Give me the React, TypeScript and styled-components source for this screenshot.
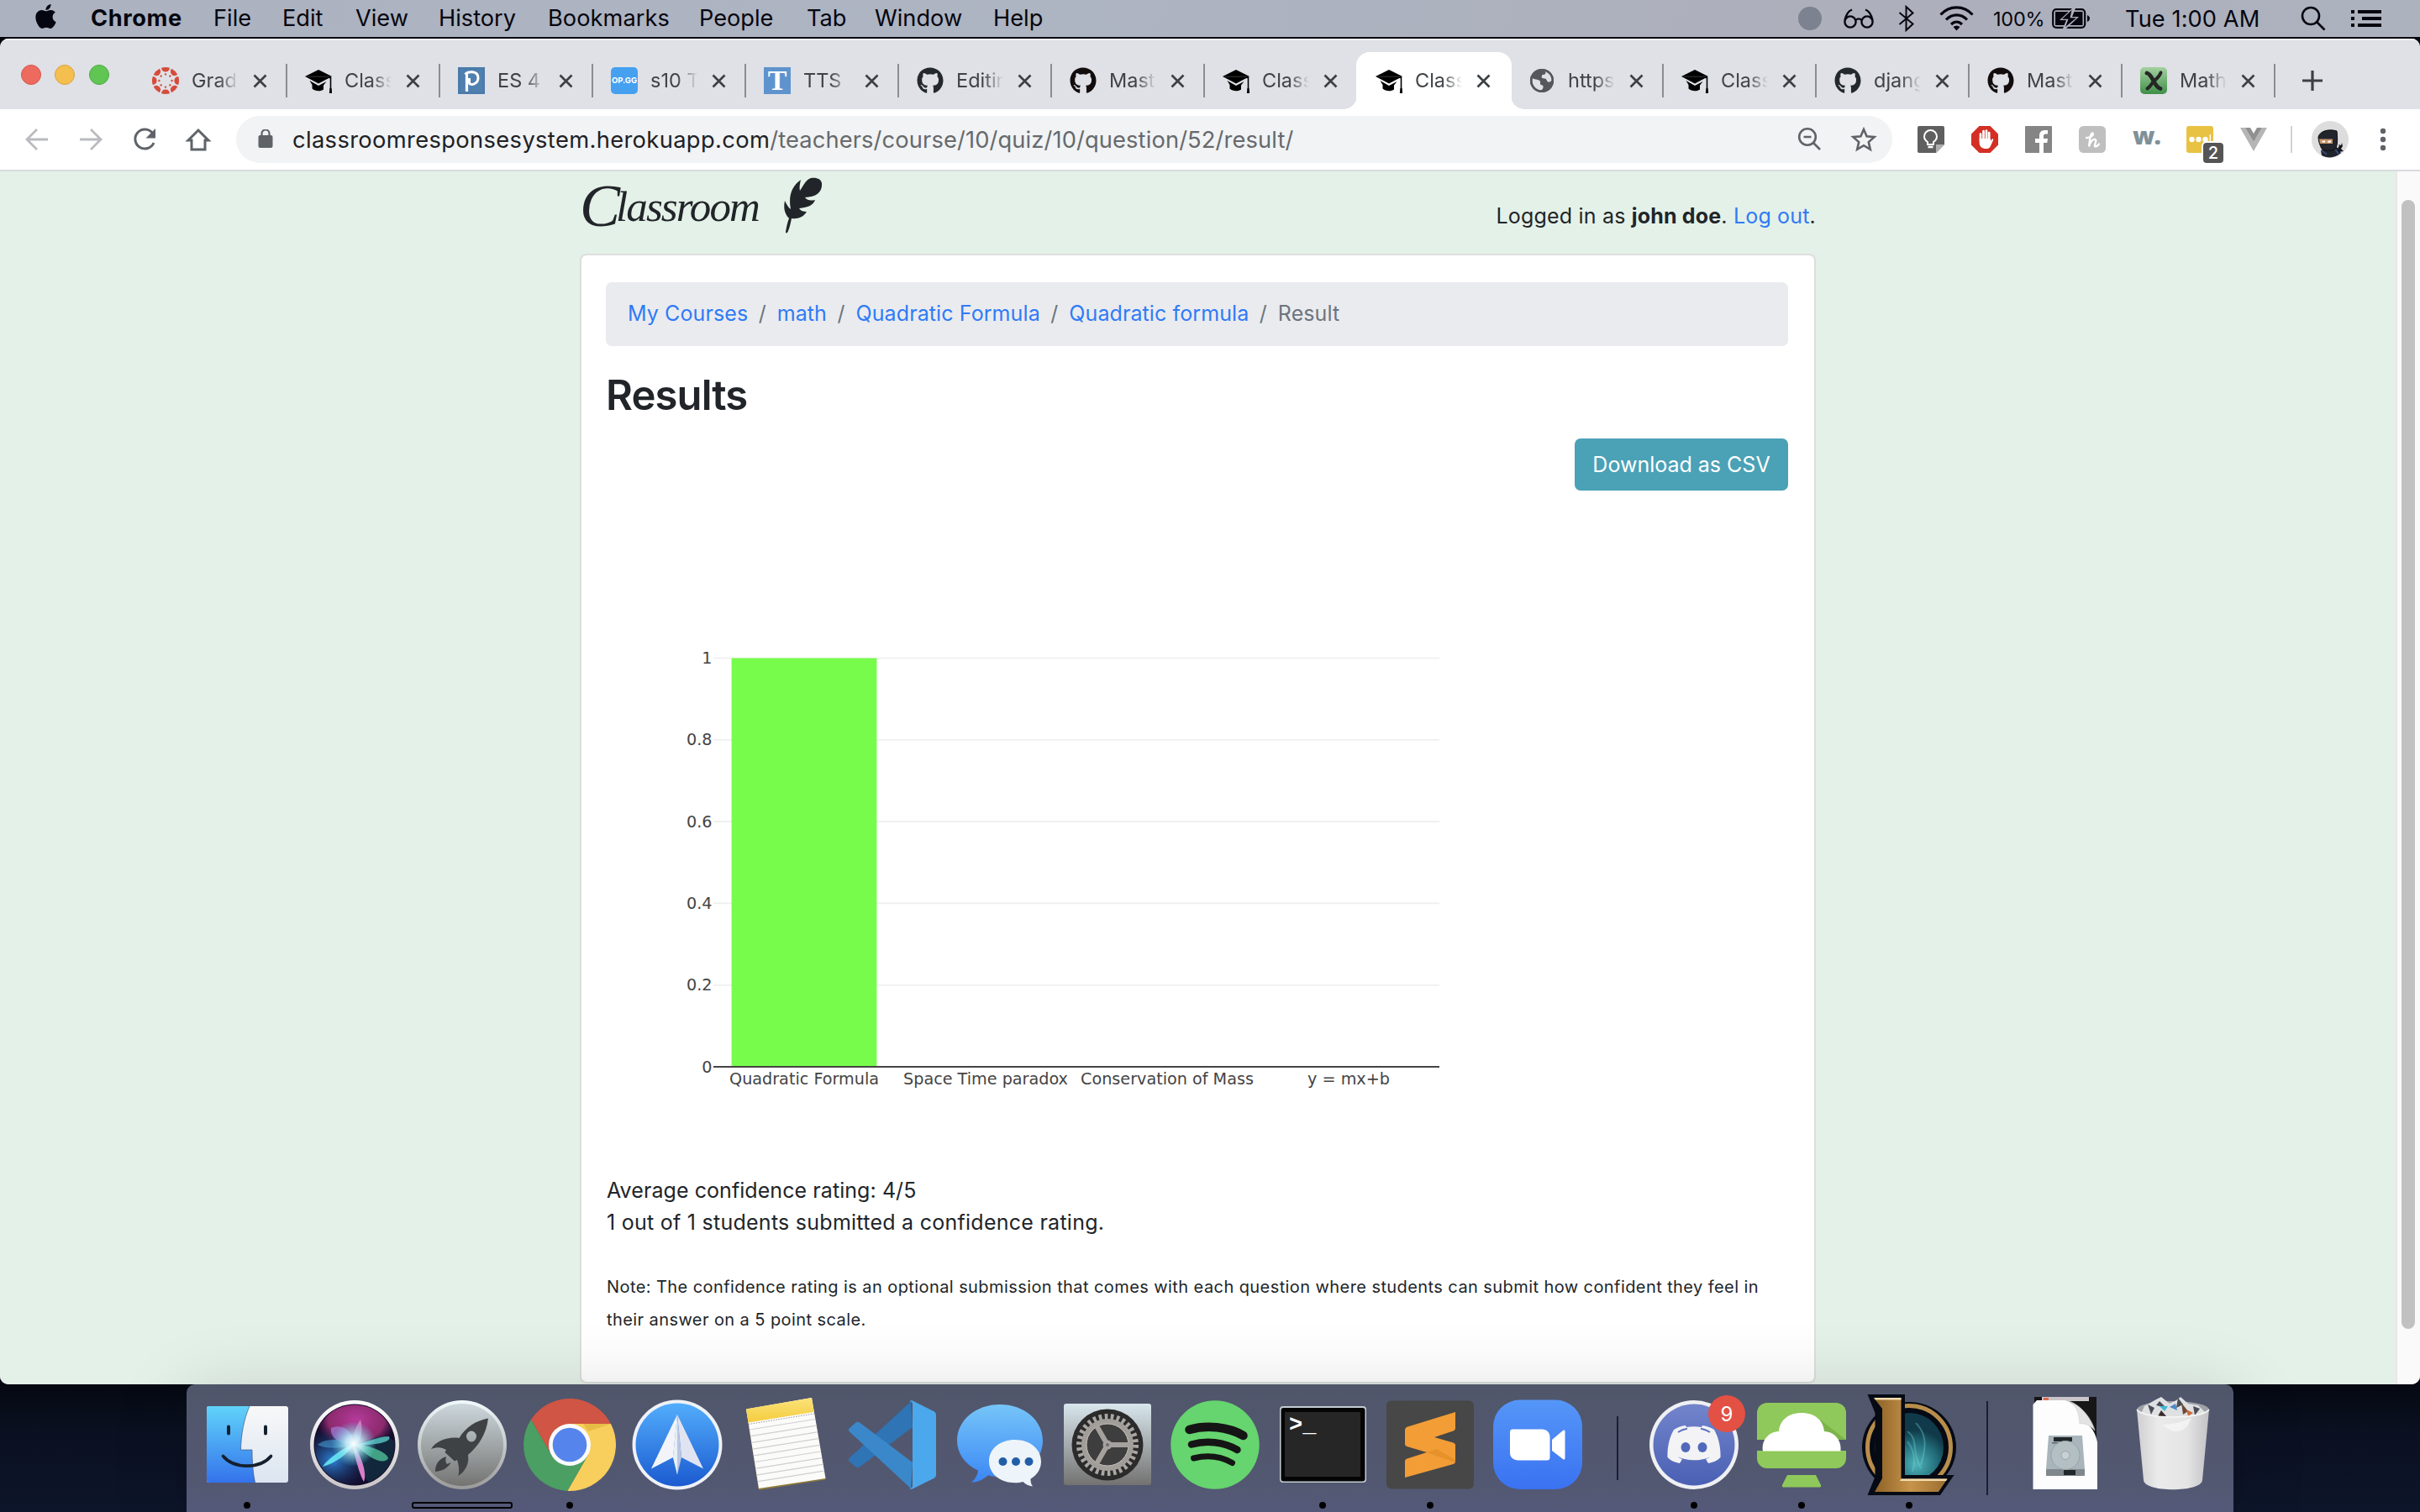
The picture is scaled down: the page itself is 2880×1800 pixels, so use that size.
import React from "react";
import styled, { createGlobalStyle, css } from "styled-components";
import { FaApple, FaGithub } from "react-icons/fa";

const GlobalStyle = createGlobalStyle`
  * { box-sizing: border-box; }
  html, body { margin: 0; padding: 0; width: 2880px; height: 1800px; overflow: hidden; }
  body { font-family: Inter, "Liberation Sans", sans-serif; color: #212529; }
  svg { display: block; flex: none; }
`;

/* ---------- desktop shell ---------- */

const Desktop = styled.div`
  width: 2880px;
  height: 1800px;
  display: flex;
  flex-direction: column;
  overflow: hidden;
  background: linear-gradient(#04070f 0, #04070f 1640px, #0a1020 1700px, #0d152a 1800px);
`;

const MenuBar = styled.header`
  height: 44px;
  flex: none;
  display: flex;
  align-items: center;
  justify-content: space-between;
  padding: 0 46px 0 38px;
  background: linear-gradient(90deg, #acb2c0, #adb4c2 45%, #adafbb 75%, #adb2bf);
  color: #05060f;
`;

const MenuGroup = styled.nav`
  display: flex;
  align-items: center;
`;

const MenuItem = styled.span<{ $w: number; $bold?: boolean; $track?: number }>`
  width: ${(p) => p.$w}px;
  font-size: 27.2px;
  line-height: 44px;
  font-weight: ${(p) => (p.$bold ? 700 : 400)};
  letter-spacing: ${(p) => p.$track ?? 0}px;
  white-space: nowrap;
`;

const AppleMark = styled(FaApple)`
  margin-top: 3px;
  margin-bottom: 8px;
`;

const StatusGroup = styled.div`
  display: flex;
  align-items: center;
`;

const StatusSlot = styled.div<{ $w: number }>`
  width: ${(p) => p.$w}px;
  display: flex;
  align-items: center;
  flex: none;
`;

const StatusText = styled.span<{ $size: number; $track?: number }>`
  font-size: ${(p) => p.$size}px;
  letter-spacing: ${(p) => p.$track ?? 0}px;
  white-space: nowrap;
`;

const RecordDot = styled.span`
  width: 28px;
  height: 28px;
  border-radius: 50%;
  background: #7c828f;
`;

const BrowserWindow = styled.main`
  margin-top: 2px;
  height: 1602px;
  flex: none;
  display: flex;
  flex-direction: column;
  border-radius: 10px;
  overflow: hidden;
  background: #fff;
`;

/* ---------- tab strip ---------- */

const TabStrip = styled.div`
  height: 84px;
  flex: none;
  display: flex;
  align-items: flex-end;
  background: #dfe1e6;
  border-top: 2px solid #f0f1f4;
`;

const Lights = styled.div`
  width: 159px;
  height: 82px;
  padding: 0 0 1px 25px;
  display: flex;
  align-items: center;
  gap: 16.4px;
`;

const Light = styled.span<{ $c: string; $b: string }>`
  width: 24px;
  height: 24px;
  border-radius: 50%;
  background: ${(p) => p.$c};
  border: 1px solid ${(p) => p.$b};
`;

const TabBox = styled.div<{ $active?: boolean }>`
  position: relative;
  width: 182px;
  height: 68px;
  flex: none;
  display: flex;
  align-items: center;
  padding-left: 22px;
  ${(p) =>
    p.$active &&
    css`
      background: #fff;
      border-radius: 16px 16px 0 0;
      box-shadow: -1px 0 0 #fff, 2px 0 0 #fff;
      &::before,
      &::after {
        content: "";
        position: absolute;
        bottom: 0;
        width: 16px;
        height: 16px;
      }
      &::before {
        left: -16px;
        background: radial-gradient(circle at 0 0, transparent 15.5px, #fff 16px);
      }
      &::after {
        right: -17px;
        background: radial-gradient(circle at 100% 0, transparent 15.5px, #fff 16px);
      }
    `}
`;

const Divider = styled.span`
  width: 2px;
  height: 40px;
  margin-left: auto;
  margin-right: -1px;
  background: #8b8d92;
`;

const TabTitle = styled.span`
  width: 72px;
  margin-left: 15px;
  overflow: hidden;
  white-space: nowrap;
  font-size: 23.5px;
  line-height: 32px;
  color: #3f4246;
  mask-image: linear-gradient(90deg, #000 32px, transparent 56px);
`;

const CloseSlot = styled.span`
  margin-left: 1px;
  display: flex;
`;

const NewTab = styled.div`
  width: 90px;
  height: 68px;
  display: flex;
  align-items: center;
  justify-content: center;
`;

/* ---------- toolbar ---------- */

const Toolbar = styled.div`
  height: 74px;
  flex: none;
  display: flex;
  align-items: center;
  padding-left: 28px;
  background: #fff;
  border-bottom: 2px solid #d9dbe0;
`;

const NavButton = styled.span`
  width: 64px;
  display: flex;
  align-items: center;
`;

const Omnibox = styled.div`
  width: 1971px;
  height: 56px;
  margin-left: -3px;
  border-radius: 28px;
  background: #f1f3f4;
  display: flex;
  align-items: center;
  padding: 0 18px 0 26px;
`;

const Url = styled.span`
  margin-left: 23px;
  font-size: 27.3px;
  letter-spacing: 0.12px;
  color: #67696c;
  white-space: nowrap;
  b {
    font-weight: 400;
    letter-spacing: 0.36px;
    color: #202124;
  }
`;

const OmniActions = styled.span`
  margin-left: auto;
  display: flex;
  gap: 34px;
  align-items: center;
`;

const Extensions = styled.div`
  display: flex;
  align-items: center;
  margin-left: 30px;
  gap: 32px;
`;

const ExtensionSlot = styled.span`
  position: relative;
  width: 32px;
  height: 32px;
  display: flex;
`;

const CountBadge = styled.span`
  position: absolute;
  left: 20px;
  top: 20px;
  width: 24px;
  height: 24px;
  border-radius: 4px;
  box-shadow: 0 0 0 2px #fff;
  background: #555;
  color: #fff;
  font-size: 20px;
  font-weight: 500;
  line-height: 24px;
  text-align: center;
`;

const WExtension = styled.span`
  width: 36px;
  margin-right: -4px;
  height: 32px;
  font-family: "Open Sans", sans-serif;
  font-weight: 800;
  font-size: 29px;
  line-height: 22px;
  letter-spacing: -1px;
  color: #7f9198;
`;

const ToolDivider = styled.span`
  width: 2px;
  height: 32px;
  margin: 0 23px 0 28px;
  background: #d0d2d5;
`;

/* ---------- page ---------- */

const Viewport = styled.div`
  flex: 1;
  min-height: 0;
  display: flex;
`;

const Page = styled.div`
  flex: 1;
  background: #e4f1e8;
  display: flex;
  flex-direction: column;
  align-items: center;
`;

const ScrollTrack = styled.div`
  width: 29px;
  background: #fafafa;
  border-left: 2px solid #e8e8e8;
  padding: 34px 0 0 5px;
`;

const ScrollThumb = styled.div`
  width: 16px;
  height: 1344px;
  border-radius: 8px;
  background: #c1c1c1;
`;

const Container = styled.div`
  width: 1471px;
`;

const PageHeader = styled.div`
  height: 98px;
  display: flex;
  justify-content: space-between;
`;

const Brand = styled.div`
  display: flex;
`;

const BrandName = styled.span`
  width: 243px;
  font-family: "Liberation Serif", serif;
  font-style: italic;
  font-size: 51px;
  letter-spacing: -1.9px;
  line-height: 84px;
  white-space: nowrap;
  color: #212529;
`;

const BrandInitial = styled.span`
  font-size: 72px;
  line-height: 0;
  letter-spacing: -5px;
  vertical-align: -6px;
`;

const LoginText = styled.span`
  margin-top: 34px;
  font-size: 25px;
  line-height: 38.4px;
  letter-spacing: 0.18px;
`;

const Link = styled.a`
  color: #2f7bf6;
`;

const Card = styled.section`
  height: 1345px;
  background: #fff;
  border: 2px solid #dcdedd;
  border-radius: 8px;
  padding: 32px 31px 0 29px;
  display: flex;
  flex-direction: column;
`;

const Breadcrumb = styled.nav`
  height: 76px;
  flex: none;
  border-radius: 7px;
  background: #eaebef;
  padding: 0 26px 2px;
  display: flex;
  align-items: center;
  font-size: 25px;
  letter-spacing: 0.1px;
  color: #6c757d;
`;

const Slash = styled.span`
  padding: 0 12.9px 0 12.5px;
`;

const Heading = styled.h2`
  margin: 28px 0 0;
  font-size: 49px;
  font-weight: 600;
  line-height: 61px;
  letter-spacing: -0.9px;
`;

const DownloadButton = styled.button`
  align-self: flex-end;
  width: 254px;
  height: 62px;
  flex: none;
  margin-top: 21px;
  padding: 0;
  border: 0;
  border-radius: 7px;
  background: #4ba1b6;
  color: #fff;
  font-family: inherit;
  font-size: 25px;
  white-space: nowrap;
`;

const Chart = styled.svg`
  width: 1404px;
  height: 814px;
  text {
    font-family: "DejaVu Sans", sans-serif;
    font-size: 19.2px;
    fill: #444;
  }
`;

const SummaryLine = styled.p<{ $track: number }>`
  margin: 0;
  padding-left: 1px;
  font-size: 25px;
  line-height: 38.4px;
  letter-spacing: ${(p) => p.$track}px;
`;

const Note = styled.p`
  margin: 38.5px 0 0;
  padding-left: 1px;
  font-size: 20px;
  line-height: 38.4px;
  letter-spacing: 0.42px;
  white-space: nowrap;
`;

const answers = [
  { label: "Quadratic Formula", value: 1 },
  { label: "Space Time paradox", value: 0 },
  { label: "Conservation of Mass", value: 0 },
  { label: "y = mx+b", value: 0 },
];

function ResultChart() {
  const base = 686;
  const unit = 486.5;
  const left = 128;
  const step = 216;
  return (
    <Chart viewBox="0 0 1404 814">
      {[0.2, 0.4, 0.6, 0.8, 1].map((v) => (
        <line key={v} x1={left} x2={left + 864} y1={base - v * unit} y2={base - v * unit} stroke="#eee" strokeWidth="1.6" />
      ))}
      {answers.map((a, i) => (
        <g key={a.label}>
          <rect x={left + step * i + 21.6} width="172.8" y={base - a.value * unit} height={a.value * unit} fill="#77fc4c" />
          <text x={left + step * i + 108} y={base + 21} textAnchor="middle">{a.label}</text>
        </g>
      ))}
      <line x1={left} x2={left + 864} y1={base} y2={base} stroke="#444" strokeWidth="2" />
      {["0", "0.2", "0.4", "0.6", "0.8", "1"].map((t) => (
        <text key={t} x={left - 1.5} y={base - Number(t) * unit + 6.5} textAnchor="end">{t}</text>
      ))}
    </Chart>
  );
}

/* ---------- small icons ---------- */

const CanvasIcon = () => (
  <svg width="32" height="32" viewBox="-16 -16 32 32" fill="#d64b3c">
    {[0, 45, 90, 135, 180, 225, 270, 315].map((a) => (
      <g key={a} transform={`rotate(${a})`}>
        <path d="M-5 -15.2 Q0 -16.8 5 -15.2 Q4.4 -10.6 0 -10.4 Q-4.4 -10.6 -5 -15.2Z" />
        <circle cx="0" cy="-7.6" r="1.2" />
      </g>
    ))}
  </svg>
);

const CapIcon = () => (
  <svg width="32" height="32" viewBox="0 0 32 32">
    <path d="M0 11 16 3l16 8-16 8.500z" fill="#000" />
    <path d="M5.500 16 16 22l9.500-5-3.500 4.500v5c-3 2.500-10 2.500-13.500-1V21z" fill="#000" />
    <path d="M16 11l14.500 1.500V27" stroke="#000" strokeWidth="1.600" fill="none" />
    <path d="M3 11.200H29" stroke="#444" strokeWidth=".8" />
    <path d="M29.500 25h2l.7 6h-3.400z" fill="#000" />
  </svg>
);

const PiazzaIcon = () => (
  <svg width="32" height="32" viewBox="0 0 32 32">
    <rect width="32" height="32" fill="#4a7bab" />
    <rect x="3" y="3" width="26" height="26" fill="#5586b3" opacity=".5" />
    <path d="M10.500 29V8" stroke="#fff" strokeWidth="3.200" />
    <path d="M8.500 8.500C12 4.500 24 4 24 12.500c0 8-9 9.500-10.500 6.500V13" stroke="#fff" strokeWidth="3" fill="none" />
  </svg>
);

const Favicon = styled.span<{ $bg: string; $size: number; $font?: string; $r?: number }>`
  width: 32px;
  height: 32px;
  flex: none;
  border-radius: ${(p) => p.$r ?? 0}px;
  background: ${(p) => p.$bg};
  color: #fff;
  font-family: ${(p) => p.$font ?? "inherit"};
  font-weight: 700;
  font-size: ${(p) => p.$size}px;
  line-height: 32px;
  text-align: center;
`;

const GlobeIcon = () => (
  <svg width="32" height="32" viewBox="0 0 32 32">
    <circle cx="16" cy="16" r="14" fill="#54575b" />
    <path d="M4.500 14.500c3.500 1.500 8.500.5 9.500 2.500s-.5 3.500 2 4 3 1.500 2.500 3.500-1 2.500-2.500 3C9 27.500 3.500 21.500 4.500 14.500zM16 4.500c2 0 3.500.3 3 2.500s-4 1-4 3.500 1 2.500 4 2.500 2.500 3.500 5 3.500 3-1.500 3.500-2.500C27 8 22 4 16 4.500z" fill="#dfe1e6" transform="rotate(8 16 16)" />
    <circle cx="16" cy="16" r="12.800" fill="none" stroke="#54575b" strokeWidth="2.600" />
  </svg>
);

const MathIcon = () => (
  <svg width="32" height="32" viewBox="0 0 32 32">
    <defs>
      <linearGradient id="mg" x1="0" y1="0" x2="0" y2="1">
        <stop offset="0" stopColor="#a5d0a0" />
        <stop offset="1" stopColor="#3f9048" />
      </linearGradient>
    </defs>
    <rect width="32" height="32" rx="5" fill="url(#mg)" />
    <path d="M8 7c4 1 6 6 8 9.500s4 8 8 9" stroke="#262626" strokeWidth="4.800" strokeLinecap="round" fill="none" />
    <path d="M24.500 6.500c-1.500 5-5 7-8 10s-3.500 6-8 9" stroke="#262626" strokeWidth="4" strokeLinecap="round" fill="none" />
  </svg>
);

const CloseIcon = () => (
  <svg width="17" height="17" viewBox="0 0 17 17" stroke="#3c4043" strokeWidth="2.700">
    <path d="M1.500 1.500l14 14M15.500 1.500l-14 14" />
  </svg>
);

const tabs: { icon: React.ReactNode; title: string; active?: boolean; divider?: boolean }[] = [
  { icon: <CanvasIcon />, title: "Grad", divider: true },
  { icon: <CapIcon />, title: "Class", divider: true },
  { icon: <PiazzaIcon />, title: "ES 4", divider: true },
  { icon: <Favicon $bg="#45a0ef" $size={9.5} $r={5}>OP.GG</Favicon>, title: "s10 T", divider: true },
  { icon: <Favicon $bg="#5f93cd" $size={34} $font='"Liberation Serif", serif'>T</Favicon>, title: "TTS", divider: true },
  { icon: <FaGithub size={32} color="#24292e" />, title: "Editin", divider: true },
  { icon: <FaGithub size={32} color="#120c0d" />, title: "Mast", divider: true },
  { icon: <CapIcon />, title: "Class" },
  { icon: <CapIcon />, title: "Class", active: true },
  { icon: <GlobeIcon />, title: "https", divider: true },
  { icon: <CapIcon />, title: "Class", divider: true },
  { icon: <FaGithub size={32} color="#24292e" />, title: "djang", divider: true },
  { icon: <FaGithub size={32} color="#120c0d" />, title: "Mast", divider: true },
  { icon: <MathIcon />, title: "Math", divider: true },
];

const GlassesIcon = () => (
  <svg width="36" height="24" viewBox="0 0 36 24" fill="none" stroke="#05060f" strokeWidth="2.400">
    <circle cx="8" cy="16" r="6.600" />
    <circle cx="28" cy="16" r="6.600" />
    <path d="M14.500 14c2-2 5-2 7 0M1.500 14C3 7 6 3 10 1.500M34.500 14C33 7 30 3 26 1.500" />
  </svg>
);

const BluetoothIcon = () => (
  <svg width="20" height="32" viewBox="0 0 20 32" fill="none" stroke="#05060f" strokeWidth="2">
    <path d="M1.500 9l16 13.500-8 7.500V2l8 7.500L1.500 23" />
  </svg>
);

const WifiIcon = () => (
  <svg width="41" height="30" viewBox="0 0 41 30" fill="none" stroke="#05060f" strokeWidth="3.200">
    <path d="M1.500 10.500C12-1 29-1 39.500 10.500M8 16.500c7-7.500 18-7.500 25 0M14 22c4-4 9-4 13 0" />
    <path d="M16.500 25c2.500-2 5.500-2 8 0l-4 4.500z" fill="#05060f" stroke="none" />
  </svg>
);

const BatteryIcon = () => (
  <svg width="46" height="24" viewBox="0 0 46 24">
    <rect x="1.200" y="1.200" width="38" height="21.600" rx="4" fill="none" stroke="#05060f" strokeWidth="2.200" />
    <path d="M42 8c4 1.500 4 6.500 0 8z" fill="#05060f" />
    <path d="M4 4h32.500v16H4z" fill="#05060f" />
    <path d="M24 0 9 14h8l-4 10h4l15-14h-8l4-10z" fill="#adb1be" />
    <path d="M23.500 2 12 12.800h7.500L16 22l13-10.800h-7.500z" fill="#05060f" />
  </svg>
);

const SearchIcon = () => (
  <svg width="30" height="30" viewBox="0 0 30 30" fill="none" stroke="#05060f" strokeWidth="2.600">
    <circle cx="12" cy="12" r="10" />
    <path d="M19 19l9.500 9.500" />
  </svg>
);

const ListIcon = () => (
  <svg width="36" height="20" viewBox="0 0 36 20" fill="#05060f">
    <path d="M0 0h4v4H0zM0 8h4v4H0zM0 16h4v4H0zM8 0h28v4H8zM13 8h23v4H13zM8 16h28v4H8z" />
  </svg>
);

const LockIcon = () => (
  <svg width="18" height="24" viewBox="0 0 18 24">
    <rect x="0.500" y="7" width="17" height="15" rx="2" fill="#5f6368" />
    <path d="M4.500 8V5a4.500 4.500 0 0 1 9 0v3" fill="none" stroke="#5f6368" strokeWidth="2.200" />
  </svg>
);

const Arrow = ({ flip }: { flip?: boolean }) => (
  <svg width="32" height="32" viewBox="0 0 32 32" fill="none" stroke="#b9bbbe" strokeWidth="2.800" transform={flip ? "scale(-1 1)" : undefined}>
    <path d="M29 16H4M16 4 4 16l12 12" />
  </svg>
);

const ReloadIcon = () => (
  <svg width="32" height="32" viewBox="0 0 32 32">
    <path d="M27 20A11.500 11.500 0 1 1 25.500 8.500" fill="none" stroke="#5f6368" strokeWidth="3" />
    <path d="M29 3v11.500H17.500z" fill="#5f6368" />
  </svg>
);

const HomeIcon = () => (
  <svg width="32" height="32" viewBox="0 0 32 32" fill="none" stroke="#5f6368" strokeWidth="3">
    <path d="M4 17 16 5l12 12h-4v11H8V17z" strokeLinejoin="miter" />
  </svg>
);

const ZoomOutIcon = () => (
  <svg width="30" height="30" viewBox="0 0 30 30" fill="none" stroke="#5f6368" strokeWidth="2.600">
    <circle cx="13" cy="12" r="9.800" />
    <path d="M20 19 28 27M8.500 12h9" />
  </svg>
);

const StarIcon = () => (
  <svg width="32" height="32" viewBox="0 0 32 32" fill="none" stroke="#5f6368" strokeWidth="2.600">
    <path d="M16 4l3.600 8.300 9 .8-6.800 6 2 8.800L16 23.200 8.200 27.900l2-8.800-6.800-6 9-.8z" />
  </svg>
);

const BulbExt = () => (
  <svg width="32" height="32" viewBox="0 0 32 32">
    <path d="M2 0h28a2 2 0 0 1 2 2v20L22 32H2a2 2 0 0 1-2-2V2a2 2 0 0 1 2-2z" fill="#5f5f5f" />
    <path d="M22 22h10L22 32z" fill="#b0b0b0" />
    <path d="M12 19c-3-2-4-4-4-6.500a7.500 7.500 0 0 1 15 0c0 2.500-1 4.500-4 6.500v3h-7z" fill="none" stroke="#fff" strokeWidth="2" />
    <path d="M12.500 25h6" stroke="#fff" strokeWidth="2.400" />
  </svg>
);

const HandExt = () => (
  <svg width="32" height="32" viewBox="0 0 32 32">
    <path d="M9.500 0h13L32 9.500v13L22.500 32h-13L0 22.500v-13z" fill="#d32f25" />
    <path d="M11 18V9.500M14.500 17V6M18 17V5.500M21.200 18V8" stroke="#fff" strokeWidth="2.700" strokeLinecap="round" />
    <path d="M9.700 15h12.900l1 2.500 1.200-2c.9-.8 1.700 0 1.300 1.200l-3.300 7.500c-1 2-2.600 2.800-5.200 2.800-5 0-7.900-2.500-7.900-7z" fill="#fff" />
  </svg>
);

const FacebookExt = () => (
  <svg width="32" height="32" viewBox="0 0 32 32">
    <rect width="32" height="32" rx="1" fill="#858585" />
    <path d="M17 32V20h-5v-5h5v-3.500C17 7 20 5 23.500 5H27v4.500h-2.500c-2 0-2.500 1-2.500 2.500v3h5l-.7 5H22v12z" fill="#fff" />
  </svg>
);

const HoneyExt = () => (
  <svg width="32" height="32" viewBox="0 0 32 32">
    <rect width="32" height="32" rx="5.500" fill="#bfbfbf" />
    <path d="M9 14c5 .5 9.500-4 7.500-5.500-2.500-1-3.500 8-4.500 16 2-6 5-9 7.500-8.500 3 1-3 8.500.5 8.500 1.800 0 3-1.500 4-3" fill="none" stroke="#fff" strokeWidth="2.300" strokeLinecap="round" />
  </svg>
);

const DotsExt = () => (
  <svg width="32" height="32" viewBox="0 0 32 32">
    <rect width="32" height="32" rx="3" fill="#e8c243" />
    <g fill="#fff">
      <circle cx="6.500" cy="16" r="3.200" />
      <circle cx="14.500" cy="16" r="3.200" />
      <circle cx="22.500" cy="16" r="3.200" />
      <path d="M27.600 10h1.400v11h-1.400z" />
    </g>
  </svg>
);

const VueExt = () => (
  <svg width="32" height="32" viewBox="0 0 32 32">
    <path d="M0 2h6l10 17L26 2h6L16 30z" fill="#b5b5b5" />
    <path d="M6 2h6l4 7 4-7h6L16 19z" fill="#909090" />
  </svg>
);

const NinjaAvatar = () => (
  <svg width="44" height="44" viewBox="0 0 44 44">
    <circle cx="22" cy="22" r="22" fill="#dddddd" />
    <path d="M11 35c4-3 16-4 20-3l4 6c-6 6-16 7-23 3z" fill="#20242c" />
    <path d="M8 19C10 12 20 9 30 12c1 8 1 15-1 21-5 3-13 3-17 0-2-4-4-9-4-14z" fill="#22252b" stroke="#0c0e12" />
    <path d="M9 21.500h16v5.500H10z" fill="#c69468" />
    <path d="M12 24l4-.8v2.200h-3zM19 24l4.500-1-1 2.800h-3z" fill="#fff" />
    <path d="M12 35l6 5M28 34l4 5" stroke="#37558f" strokeWidth="1.500" />
    <path d="M32 37c-1-4-1-6 1-7l-1-2 3 1 1-3 1 4-2 3 3 3z" fill="#16181d" />
  </svg>
);

/* ---------- dock ---------- */

const DockArea = styled.footer`
  height: 152px;
  display: flex;
  justify-content: center;
`;

const DockShelf = styled.div`
  position: relative;
  width: 2436px;
  height: 152px;
  padding: 0 8px;
  display: flex;
  border-radius: 10px 10px 0 0;
  background: linear-gradient(#50566a, #535872 80%, #54597a);
  box-shadow: 0 14px 90px rgba(0, 0, 0, 0.16);
`;

const DockCell = styled.div`
  width: 128px;
  flex: none;
  display: flex;
  flex-direction: column;
  align-items: center;
`;

const RunningDot = styled.span`
  width: 8px;
  height: 8px;
  margin-top: 4px;
  border-radius: 50%;
  background: #000;
`;

const LaunchIndicator = styled.span`
  width: 120px;
  height: 8px;
  margin-top: 4px;
  border: 2px solid #000;
  border-radius: 3px;
`;

const DockDivider = styled.div<{ $h: number; $top: number; $left: number }>`
  width: 2px;
  height: ${(p) => p.$h}px;
  margin: ${(p) => p.$top}px ${(p) => 56 - p.$left}px 0 ${(p) => p.$left}px;
  background: #1a1f36;
`;

const Glyph = ({ children }: { children: React.ReactNode }) => (
  <svg width="128" height="136" viewBox="0 0 128 136">{children}</svg>
);

const Grad = ({ id, a, b }: { id: string; a: string; b: string }) => (
  <linearGradient id={id} x1="0" y1="0" x2="0" y2="1">
    <stop offset="0" stopColor={a} />
    <stop offset="1" stopColor={b} />
  </linearGradient>
);

const Finder = () => (
  <Glyph>
    <defs>
      <Grad id="fa" a="#60d3fa" b="#3473ec" />
      <Grad id="fb" a="#f8f8f8" b="#dbe5f1" />
      <clipPath id="fc"><rect x="16" y="26" width="97" height="91" rx="3" /></clipPath>
    </defs>
    <g clipPath="url(#fc)">
      <rect x="16" y="26" width="97" height="91" fill="url(#fb)" />
      <path d="M16 26h51c-7 16-10 34-10.500 52H70c0 14 1 27 3.500 39H16z" fill="url(#fa)" />
    </g>
    <path d="M67 26c-7 16-10 34-10.500 52H70c0 14 1 27 3.500 39" fill="none" stroke="#2b4a70" strokeWidth="1" opacity=".6" />
    <path d="M42 50.500v8M86 50.500v8" stroke="#15202e" strokeWidth="4" strokeLinecap="round" />
    <path d="M35.500 85.500c13 15.500 44 15.500 57 0" fill="none" stroke="#15202e" strokeWidth="3.600" strokeLinecap="round" />
  </Glyph>
);

const Siri = () => (
  <Glyph>
    <defs>
      <radialGradient id="sw"><stop offset="0" stopColor="#fff" /><stop offset=".35" stopColor="#c9f7ff" stopOpacity=".85" /><stop offset="1" stopColor="#58d8ee" stopOpacity="0" /></radialGradient>
      <radialGradient id="sp"><stop offset="0" stopColor="#b53a9c" /><stop offset=".7" stopColor="#a8327c" stopOpacity=".8" /><stop offset="1" stopColor="#7a1d63" stopOpacity="0" /></radialGradient>
      <radialGradient id="sb"><stop offset="0" stopColor="#2f8ae4" stopOpacity=".95" /><stop offset="1" stopColor="#15335f" stopOpacity="0" /></radialGradient>
      <Grad id="sr" a="#ffffff" b="#c9c5c6" />
      <clipPath id="sc"><circle cx="64" cy="72" r="47.500" /></clipPath>
    </defs>
    <circle cx="64" cy="72" r="53" fill="url(#sr)" />
    <circle cx="64" cy="72" r="48.500" fill="#140c2c" />
    <g clipPath="url(#sc)">
      <ellipse cx="66" cy="42" rx="48" ry="36" fill="url(#sp)" />
      <ellipse cx="38" cy="90" rx="46" ry="40" fill="url(#sb)" />
      <ellipse cx="96" cy="92" rx="26" ry="30" fill="#123b48" opacity=".6" />
      <path d="M36 52c14-6 26 4 28 19-16 0-30-6-28-19z" fill="#a98be8" opacity=".6" />
      <path d="M71 42c3 10 2 22-5 30-6-8-2-20 5-30z" fill="#f3b3e6" opacity=".5" />
      <path d="M62 73c14-3 30-11 43-11 3 5-6 10-43 11z" fill="#5fe0d8" opacity=".7" />
      <path d="M66 72c14 0 36 8 38 16-4 8-22 2-38-16z" fill="#53c99c" opacity=".75" />
      <path d="M64 70c-10 4-32 18-38 28 14-4 30-14 38-28z" fill="#6beef4" opacity=".85" />
      <path d="M64 72c-14-8-36-8-44 0 12 6 30 4 44 0z" fill="#4aa0d9" opacity=".55" />
      <path d="M62 72c2 14 8 36 13 44 4-10-3-32-13-44z" fill="#f08ad6" opacity=".9" />
      <circle cx="63" cy="71" r="27" fill="url(#sw)" />
    </g>
  </Glyph>
);

const Launchpad = () => (
  <Glyph>
    <defs><Grad id="la" a="#cdd8dd" b="#747472" /><Grad id="lb" a="#f2fafd" b="#9a9a9a" /></defs>
    <circle cx="64" cy="72" r="53" fill="url(#lb)" />
    <circle cx="64" cy="72" r="49" fill="url(#la)" />
    <path d="M95 40.500C81 43 68 51 60.500 64 48 62 33 67 27 77c8-3 13-2 18 1l-1.500 3L55 91.500l3-1.500c2 6 3 12 1.500 19 9-6 13-15 11.500-25C83 74 93 59 95 40.500zM75 55.500a6 6.500 0 1 1 0 13 6 6.500 0 1 1 0-13zM45 86c-9 3-13 9-13 18 9-1 16-5 18.500-11l-4.500 2c-2-2-2-5-1-9z" fill="#3f4245" fillRule="evenodd" />
  </Glyph>
);

const Chrome = () => (
  <Glyph>
    <path d="M17.900 42.100A55 55 0 0 1 113 47H64L42.400 84.500z" fill="#d05544" />
    <path d="M113 47A55 55 0 0 1 61.200 126.900L85.600 84.500 64 47z" fill="#f8cf5c" />
    <path d="M61.200 126.900A55 55 0 0 1 17.900 42.100L42.400 84.500h43.200z" fill="#4b9f62" />
    <path d="M80 47h33l-27 9z" fill="#d3a72d" opacity=".45" />
    <circle cx="64" cy="72" r="25" fill="#fafafa" />
    <circle cx="64" cy="72" r="20.300" fill="#5585ec" />
  </Glyph>
);

const PaperPlane = () => (
  <Glyph>
    <defs><Grad id="pa" a="#52adfc" b="#1b5ad0" /></defs>
    <circle cx="64" cy="72" r="53.500" fill="#eef1f6" />
    <circle cx="64" cy="72" r="49.500" fill="url(#pa)" />
    <path d="M64 36 33 100.500 59 87z" fill="#f2f4fa" />
    <path d="M64 36l31 64.500L69 87z" fill="#e0e4f1" />
    <path d="M64 36 59 87l5 20.500L69 87z" fill="#b9c7df" />
    <path d="M64 36 59 87l5 20.500z" fill="#e9eef7" />
  </Glyph>
);

const Notes = () => (
  <Glyph>
    <defs><Grad id="na" a="#fbe37a" b="#f4cc3e" /></defs>
    <path d="M18 29.500 96 16l16.500 97.500L33 126z" fill="#8c7a36" />
    <path d="M18 29.500 96 16l16.500 96L33 124z" fill="#fbfbfa" />
    <path d="M18 29.500 96 16l2.500 17L20.500 45.500z" fill="url(#na)" />
    <path d="M20.800 47.500 98.800 35" stroke="#999" strokeWidth="1" strokeDasharray="1.500 1.500" />
    {[0, 1, 2, 3, 4, 5, 6, 7, 8].map((i) => (
      <path key={i} d={`M${22.3 + i * 1.25} ${54 + i * 7.7} L${100 + i * 1.3} ${41.5 + i * 7.7}`} stroke="#cfcfcf" strokeWidth="1.200" />
    ))}
  </Glyph>
);

const Code = () => (
  <Glyph>
    <path d="M86 20.500 88 51 25 98.500c-1.500 1.200-3 1-4.500 0L13 92c-1.500-1.500-1.500-3 0-4.500z" fill="#2f74b4" />
    <path d="M86 124 88 93 25 45.500c-1.500-1.200-3-1-4.500 0L13 52c-1.500 1.500-1.500 3 0 4.500z" fill="#3a88ca" />
    <path d="M88 19.500 113 32c2 1 3 2.500 3 4.500v71c0 2-1 3.500-3 4.500L88 124.500c-1.500.6-3 0-3.500-1 2 .5 3.500-.5 3.500-3v-97c0-2.500-1.500-3.500-3.500-3 .5-1 2-1.600 3.500-1z" fill="#4ca8ec" />
  </Glyph>
);

const Messages = () => (
  <Glyph>
    <defs><Grad id="ma" a="#76c5f8" b="#3b87f6" /></defs>
    <path d="M64 24c29 0 51 19 51 43s-22 43-51 43c-5 0-10-.5-14-1.800-6 5-12 8.500-20 8.300 5-4 7.500-8.500 8-14C22 95 13 82 13 67c0-24 22-43 51-43z" fill="url(#ma)" />
    <path d="M82 66c18 0 31 11 31 26 0 9-5 16-12.500 20.500 0 4 .5 6.500 2.500 9-5-.5-8.500-2.500-11.500-5.500-3 .9-6 1.200-9.500 1.200-18 0-31-11-31-25.500 0-15 13-25.700 31-25.700z" fill="#edf4fa" />
    <g fill="#215ea8"><circle cx="67.500" cy="92" r="5" /><circle cx="83" cy="92" r="5" /><circle cx="98.500" cy="92" r="5" /></g>
  </Glyph>
);

const Preferences = () => (
  <Glyph>
    <defs><Grad id="ga" a="#d8e6ed" b="#737271" /></defs>
    <rect x="12" y="23" width="104" height="97" rx="3" fill="url(#ga)" />
    <circle cx="64" cy="72" r="42.500" fill="#2b2b2c" />
    <circle cx="64" cy="72" r="33.500" fill="none" stroke="#aaa7a3" strokeWidth="7" strokeDasharray="3.600 3.416" />
    <circle cx="64" cy="72" r="28" fill="#3f3e3e" stroke="#a19e9a" strokeWidth="6" />
    <circle cx="64" cy="72" r="25" fill="none" stroke="#c5c2be" strokeWidth="1" />
    <g stroke="#a5a29e" strokeWidth="6">
      <path d="M64 72h27M64 72 50.500 48.500M64 72 50.500 95.500" />
    </g>
    <circle cx="64" cy="72" r="5.500" fill="#a5a39f" />
    <circle cx="64" cy="72" r="2" fill="#6c6b69" />
  </Glyph>
);

const Spotify = () => (
  <Glyph>
    <circle cx="64" cy="72" r="52.700" fill="#66d46f" />
    <g fill="none" stroke="#151515" strokeLinecap="round">
      <path d="M33.500 54c20-6 46-3.500 64 7" strokeWidth="10.500" />
      <path d="M36 71.500c18-5 38-3 54.500 6.500" strokeWidth="8.500" />
      <path d="M38.500 88c16-4 32-2.500 46 5.500" strokeWidth="7" />
    </g>
  </Glyph>
);

const Terminal = () => (
  <Glyph>
    <rect x="13" y="26" width="103" height="91" rx="4" fill="#c4ccd2" />
    <rect x="14.500" y="28" width="100" height="87.500" rx="3" fill="#050505" />
    <rect x="19" y="33" width="90" height="77" fill="#262626" />
    <text x="24" y="56" fill="#fff" fontFamily='"Liberation Mono", monospace' fontWeight="700" fontSize="27">{">_"}</text>
  </Glyph>
);

const Sublime = () => (
  <Glyph>
    <rect x="12" y="19.500" width="104" height="105" rx="6" fill="#474747" />
    <path d="M34 55c0-2 .5-3.500 2.500-4.300L94 33v19c0 2-1 3-2.500 3.500L69 63l22.500 6.500c1.500.5 2.500 1.500 2.500 3v19c0 1.500-.5 2.500-2.500 3.500L34 111V92c0-2 1-3 2.500-3.500L60 81l-23.500-7c-1.500-.5-2.500-1.500-2.500-3z" fill="#f39d36" />
    <path d="M60 81 72 77l22 13v3z" fill="#dd8822" opacity=".6" />
  </Glyph>
);

const ZoomApp = () => (
  <Glyph>
    <defs><Grad id="za" a="#5596f8" b="#3a72f1" /></defs>
    <rect x="11" y="18.500" width="106" height="106.500" rx="32" fill="url(#za)" />
    <path d="M34 53.500h35c6 0 9.500 4 9.500 9V87c0 2-1 3.500-3.500 3.500H41c-6 0-10-3.500-10-9V57c0-2 1-3.500 3-3.500zM81 66l13-11c1.500-1 2.500-.5 2.500 1v32c0 1.500-1 2-2.500 1L81 79z" fill="#fff" />
  </Glyph>
);

const Discord = () => (
  <Glyph>
    <defs><Grad id="da" a="#7284cb" b="#4a60b4" /></defs>
    <circle cx="64" cy="72" r="53" fill="#eff0f3" />
    <circle cx="64" cy="72" r="48.500" fill="url(#da)" />
    <path d="M40 54c5-3 9-4.500 14-5l1 2c6-1 12-1 18 0l1-2c5 .5 9 2 14 5 5 9 8 20 7.500 33-4 4-9 6-14.500 7l-3-5c2-.6 4-1.500 5.500-2.700-12 5.300-27 5.300-39 0C46 87.500 48 88.400 50 89l-3 5c-5.500-1-10.500-3-14.500-7C32 74 35 63 40 54z" fill="#f3f3f5" />
    <ellipse cx="54" cy="75" rx="5.500" ry="6" fill="#5268ba" />
    <ellipse cx="74" cy="75" rx="5.500" ry="6" fill="#5268ba" />
    <path d="M45 57c4-2.500 7-3.500 11-4.200M83 57c-4-2.500-7-3.500-11-4.200" stroke="#5f74c2" strokeWidth="2" />
    <circle cx="103" cy="35" r="22" fill="#e35044" />
    <text x="103" y="43.500" textAnchor="middle" fill="#fff" fontFamily="Inter, sans-serif" fontSize="24">9</text>
  </Glyph>
);

const CloudDesktop = () => (
  <Glyph>
    <path d="M23 22h82a12 12 0 0 1 12 12v32H11V34a12 12 0 0 1 12-12z" fill="#8fc95b" />
    <path d="M86 42 117 66H90z" fill="#6fa63f" opacity=".6" />
    <path d="M11 79h106v9a12 12 0 0 1-12 12H23a12 12 0 0 1-12-12z" fill="#8fc95b" />
    <path d="M18 79.500c-2-12 6-23 19-23.500 1-13 11-22 27-22s26 9 27 22c13 .5 21 11.500 19.500 23.500z" fill="#fff" />
    <path d="M47 108h34l6 12c.4 1.500 0 2.500-1.500 2.500h-43c-1.500 0-2-1-1.500-2.500z" fill="#8fc95b" />
  </Glyph>
);

const League = () => (
  <Glyph>
    <defs>
      <linearGradient id="lg" x1="0" y1="0" x2="1" y2="0"><stop offset="0" stopColor="#8c6126" /><stop offset=".5" stopColor="#c6934a" /><stop offset="1" stopColor="#9b6e30" /></linearGradient>
      <radialGradient id="lt" cx=".6" cy=".75"><stop offset="0" stopColor="#4fb3b8" /><stop offset=".6" stopColor="#236f7c" /><stop offset="1" stopColor="#103a49" /></radialGradient>
    </defs>
    <ellipse cx="64" cy="75" rx="56" ry="54" fill="#050a14" />
    <circle cx="64" cy="75" r="49.500" fill="none" stroke="#b98d4a" strokeWidth="5" />
    <circle cx="64" cy="75" r="41" fill="url(#lt)" />
    <path d="M62 56c14 10 4 24 16 44M72 46c14 14 12 30 6 50M62 68c8 10 10 22 6 36" fill="none" stroke="#77d6d6" strokeWidth="2" opacity=".35" />
    <path d="M14.500 12H59v96h58.500L101 132H14.500l9-22V34z" fill="#050a14" />
    <path d="M22 16h32.500v96.500h55L99 128H23l9-16V29z" fill="url(#lg)" />
    <path d="M22 16h32.500v2.500H24zM54.500 112.500h55l-1.500 2.500H53z" fill="#f0dcae" />
  </Glyph>
);

const DiskDocument = () => (
  <Glyph>
    <rect x="27" y="15" width="74" height="60" fill="#161616" />
    <rect x="36" y="15" width="56" height="5" fill="#c9c5c8" />
    <path d="M38 17.500h6" stroke="#e06a52" strokeWidth="3" />
    <path d="M25.500 24 30 19h34c10 2 16 12 19 22 8 6 16 12 19 28v56H25.500z" fill="#fdfdfd" />
    <path d="M64 19c14 4 16 16 17 28 6-1 13 2 18 8-4-16-20-34-35-36z" fill="#e3e3e3" stroke="#cfcfcf" strokeWidth=".6" />
    <path d="M44 61h40l3 40v8H41v-8z" fill="#a9b5bb" />
    <rect x="41" y="101" width="46" height="8" rx="1" fill="#7e888d" />
    <rect x="50" y="63" width="22" height="5" fill="#22272a" />
    <rect x="48" y="69" width="24" height="1.500" fill="#5b656a" />
    <circle cx="64" cy="84.500" r="17" fill="#b4bfc4" stroke="#98a4a9" strokeWidth="1" />
    <circle cx="64" cy="84.500" r="5" fill="#c8d0d3" stroke="#98a4a9" strokeWidth="1" />
    <path d="M62 102h14v6H62z" fill="#22272a" />
  </Glyph>
);

const Trash = () => (
  <Glyph>
    <defs><linearGradient id="tr" x1="0" y1="0" x2="1" y2="0"><stop offset="0" stopColor="#cfcfd1" /><stop offset=".3" stopColor="#ebebec" /><stop offset=".7" stopColor="#e4e4e5" /><stop offset="1" stopColor="#c2c2c5" /></linearGradient></defs>
    <ellipse cx="64" cy="30" rx="43" ry="10" fill="#9fa2a8" />
    <path d="M30 26l14-8 6-3 10 8 8-4 5-4 9 8 12 2 8 8-8 8H34l-8-6z" fill="#dfe0e2" />
    <path d="M34 24l8 4-4 8zM48 20l8 8-12-3zM70 16l6 8-8 4zM88 26l8 3-6 8z" fill="#4a4d55" />
    <path d="M48 26l10 0-4 6z" fill="#3fb7d8" />
    <path d="M60 27l7-4 2 8z" fill="#4c86c8" />
    <path d="M74 22l8 10-6 4z" fill="#6b4a3a" />
    <path d="M80 30l8 4-6 4z" fill="#cc6a3a" />
    <path d="M50 31l6 7H46z" fill="#3a2c2c" />
    <path d="M21 30c8 12 78 12 86 0l-8 84c-1 15-69 15-70 0z" fill="url(#tr)" />
    <path d="M21 30c8 12 78 12 86 0" fill="none" stroke="#f7f7f8" strokeWidth="1.500" />
    <path d="M52 48c10 10 26 14 34-8-10 4-20 8-34 8z" fill="#fff" opacity=".5" />
  </Glyph>
);

const mainApps: { el: React.ReactNode; mark?: "dot" | "bar" }[] = [
  { el: <Finder />, mark: "dot" },
  { el: <Siri /> },
  { el: <Launchpad />, mark: "bar" },
  { el: <Chrome />, mark: "dot" },
  { el: <PaperPlane /> },
  { el: <Notes /> },
  { el: <Code /> },
  { el: <Messages /> },
  { el: <Preferences /> },
  { el: <Spotify /> },
  { el: <Terminal />, mark: "dot" },
  { el: <Sublime />, mark: "dot" },
  { el: <ZoomApp /> },
];

const recentApps: { el: React.ReactNode; mark?: "dot" | "bar" }[] = [
  { el: <Discord />, mark: "dot" },
  { el: <CloudDesktop />, mark: "dot" },
  { el: <League />, mark: "dot" },
];

const DockItems = ({ items }: { items: typeof mainApps }) => (
  <>
    {items.map((a, i) => (
      <DockCell key={i}>
        {a.el}
        {a.mark === "dot" && <RunningDot />}
        {a.mark === "bar" && <LaunchIndicator />}
      </DockCell>
    ))}
  </>
);

const menus: [string, number, number][] = [
  ["File", 82, 0],
  ["Edit", 87, 0],
  ["View", 99, 0],
  ["History", 130, 0],
  ["Bookmarks", 180, 0.05],
  ["People", 128, 0],
  ["Tab", 81, 0],
  ["Window", 141, 0],
  ["Help", 80, 0],
];

export default function App() {
  return (
    <Desktop>
      <GlobalStyle />
      <MenuBar>
        <MenuGroup>
          <MenuItem $w={70}><AppleMark size={33} /></MenuItem>
          <MenuItem $w={146} $bold $track={0.6}>Chrome</MenuItem>
          {menus.map(([label, w, track]) => (
            <MenuItem key={label} $w={w} $track={track}>{label}</MenuItem>
          ))}
        </MenuGroup>
        <StatusGroup>
          <StatusSlot $w={54}><RecordDot /></StatusSlot>
          <StatusSlot $w={65}><GlassesIcon /></StatusSlot>
          <StatusSlot $w={49}><BluetoothIcon /></StatusSlot>
          <StatusSlot $w={64}><WifiIcon /></StatusSlot>
          <StatusSlot $w={70}><StatusText $size={23.5} $track={-0.2}>100%</StatusText></StatusSlot>
          <StatusSlot $w={87}><BatteryIcon /></StatusSlot>
          <StatusSlot $w={209}><StatusText $size={27.2} $track={0.1}>Tue 1:00 AM</StatusText></StatusSlot>
          <StatusSlot $w={60}><SearchIcon /></StatusSlot>
          <StatusSlot $w={36}><ListIcon /></StatusSlot>
        </StatusGroup>
      </MenuBar>

      <BrowserWindow>
        <TabStrip>
          <Lights>
            <Light $c="#ed6a5e" $b="#d5564b" />
            <Light $c="#f5bf4f" $b="#d9a33f" />
            <Light $c="#61c554" $b="#4cab41" />
          </Lights>
          {tabs.map((t, i) => (
            <TabBox key={i} $active={t.active}>
              {t.icon}
              <TabTitle>{t.title}</TabTitle>
              <CloseSlot><CloseIcon /></CloseSlot>
              {t.divider && <Divider />}
            </TabBox>
          ))}
          <NewTab>
            <svg width="24" height="24" viewBox="0 0 24 24" stroke="#3c4043" strokeWidth="3.200">
              <path d="M12 0v24M0 12h24" />
            </svg>
          </NewTab>
        </TabStrip>

        <Toolbar>
          <NavButton><Arrow /></NavButton>
          <NavButton><Arrow flip /></NavButton>
          <NavButton><ReloadIcon /></NavButton>
          <NavButton><HomeIcon /></NavButton>
          <Omnibox>
            <LockIcon />
            <Url><b>classroomresponsesystem.herokuapp.com</b>/teachers/course/10/quiz/10/question/52/result/</Url>
            <OmniActions>
              <ZoomOutIcon />
              <StarIcon />
            </OmniActions>
          </Omnibox>
          <Extensions>
            <ExtensionSlot><BulbExt /></ExtensionSlot>
            <ExtensionSlot><HandExt /></ExtensionSlot>
            <ExtensionSlot><FacebookExt /></ExtensionSlot>
            <ExtensionSlot><HoneyExt /></ExtensionSlot>
            <WExtension>w.</WExtension>
            <ExtensionSlot>
              <DotsExt />
              <CountBadge>2</CountBadge>
            </ExtensionSlot>
            <ExtensionSlot><VueExt /></ExtensionSlot>
          </Extensions>
          <ToolDivider />
          <NinjaAvatar />
          <svg width="80" height="32" viewBox="0 0 80 32" fill="#5f6368">
            <circle cx="41" cy="6" r="3.200" />
            <circle cx="41" cy="16" r="3.200" />
            <circle cx="41" cy="26" r="3.200" />
          </svg>
        </Toolbar>

        <Viewport>
          <Page>
            <Container>
              <PageHeader>
                <Brand>
                  <BrandName><BrandInitial>C</BrandInitial>lassroom</BrandName>
                  <svg width="50" height="80" viewBox="0 0 50 80" fill="#212529">
                    <path d="M2 72c1-6 2-11 4-16-5-5-7-12-5-21 2 4 4 8 7 10C5 29 9 18 20 10c-1 5-2 9-1 13 4-6 7-13 13-15 7-1 12 1 13 6 1 10-6 17-20 17 3 4 7 4 12 3-2 6-8 9-19 10 2 3 5 4 9 4-4 6-9 9-18 8-1 5-2 10-4 15-1 3-3 3-3 1z" />
                  </svg>
                </Brand>
                <LoginText>Logged in as <strong>john doe</strong>. <Link>Log out</Link>.</LoginText>
              </PageHeader>
              <Card>
                <Breadcrumb>
                  <Link>My Courses</Link><Slash>/</Slash>
                  <Link>math</Link><Slash>/</Slash>
                  <Link>Quadratic Formula</Link><Slash>/</Slash>
                  <Link>Quadratic formula</Link><Slash>/</Slash>
                  <span>Result</span>
                </Breadcrumb>
                <Heading>Results</Heading>
                <DownloadButton>Download as CSV</DownloadButton>
                <ResultChart />
                <SummaryLine $track={0.07}>Average confidence rating: 4/5</SummaryLine>
                <SummaryLine $track={0.26}>1 out of 1 students submitted a confidence rating.</SummaryLine>
                <Note>
                  Note: The confidence rating is an optional submission that comes with each question where students can submit how confident they feel in<br />
                  their answer on a 5 point scale.
                </Note>
              </Card>
            </Container>
          </Page>
          <ScrollTrack><ScrollThumb /></ScrollTrack>
        </Viewport>
      </BrowserWindow>

      <DockArea>
        <DockShelf>
          <DockItems items={mainApps} />
          <DockDivider $h={76} $top={38} $left={30} />
          <DockItems items={recentApps} />
          <DockDivider $h={112} $top={20} $left={28} />
          <DockCell><DiskDocument /></DockCell>
          <DockCell><Trash /></DockCell>
        </DockShelf>
      </DockArea>
    </Desktop>
  );
}
